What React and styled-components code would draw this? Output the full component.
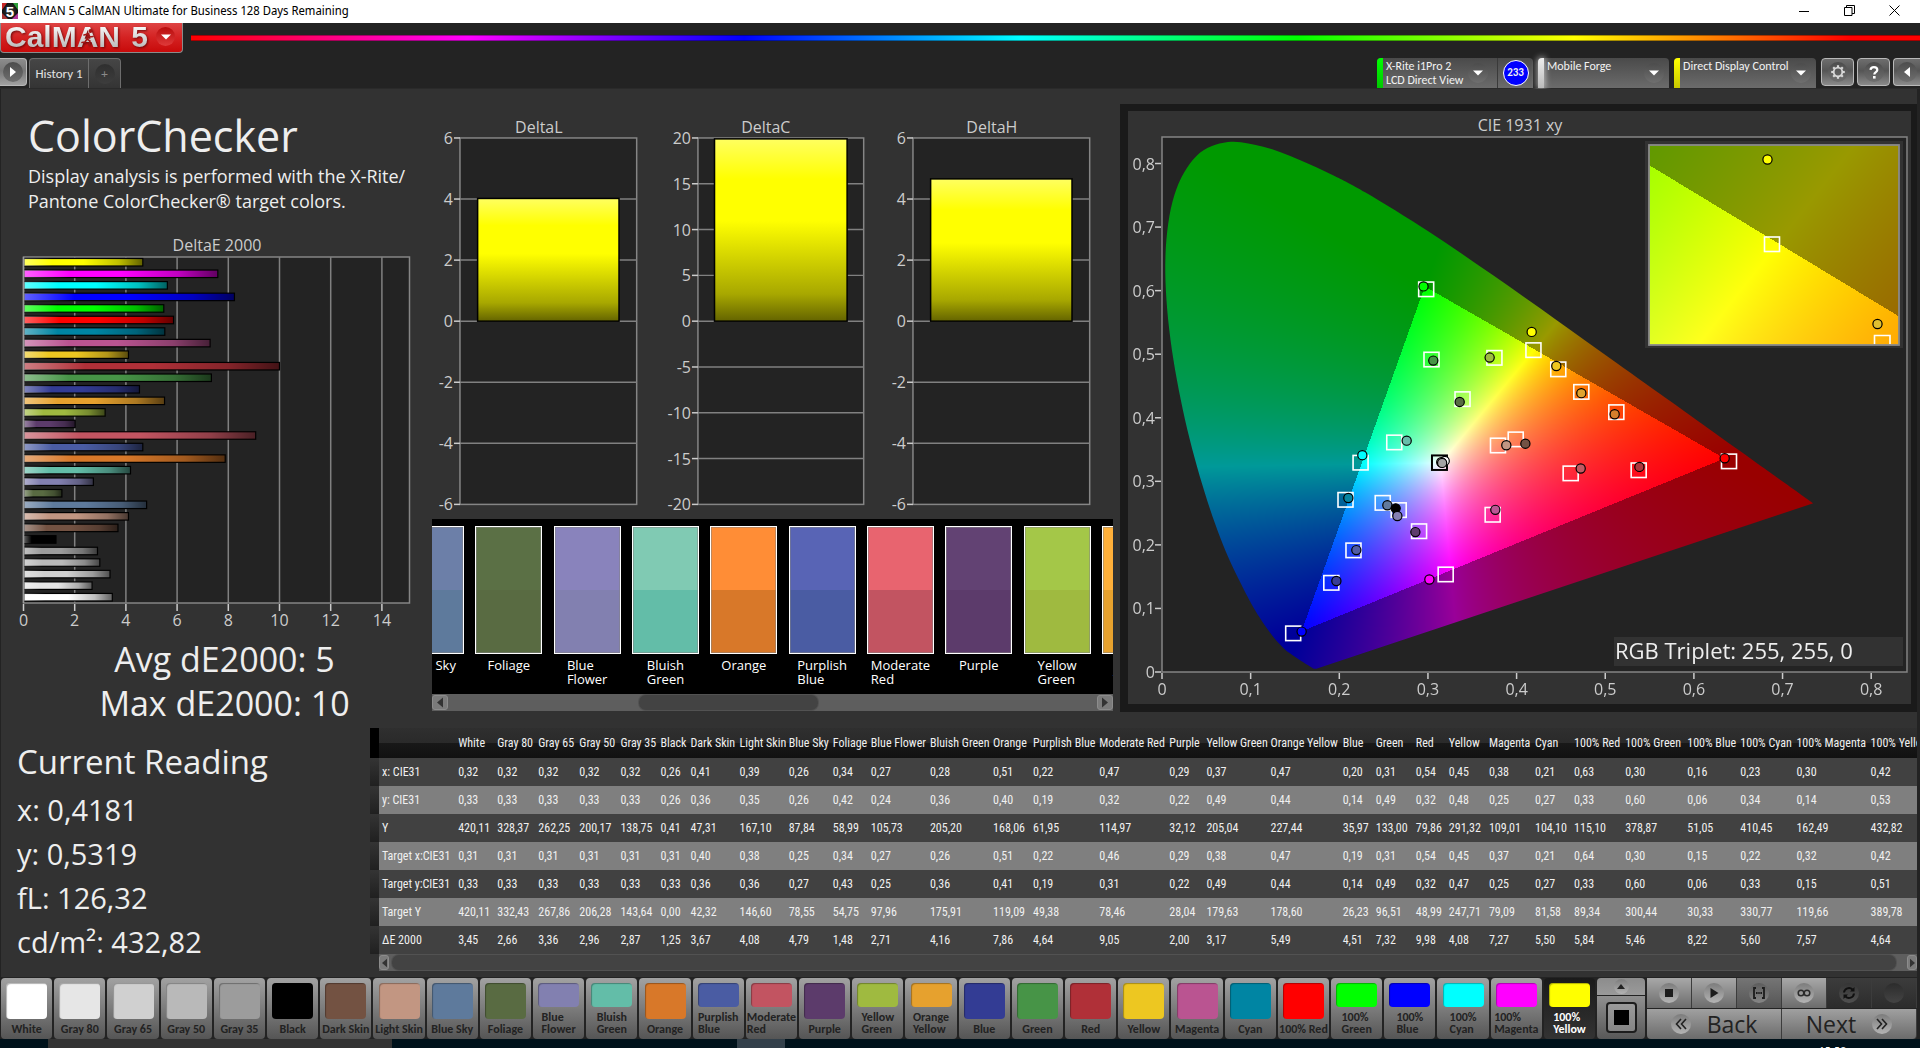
import React, { useEffect, useRef } from "react";
import styled, { createGlobalStyle, css } from "styled-components";

const WIDE = '"Open Sans", "Noto Sans", sans-serif';
const SMALL = 'Carlito, Lato, "Open Sans", sans-serif';
const NARROW = '"Roboto Condensed", Roboto, "Open Sans", sans-serif';

const Global = createGlobalStyle`
  *, *::before, *::after { box-sizing: border-box; }
  body { margin: 0; background: #232323; font-family: ${WIDE}; color: #eee; overflow: hidden; }
  button { font: inherit; color: inherit; margin: 0; padding: 0; border: 0; background: none; }
  h1, h2, p, ul { margin: 0; padding: 0; list-style: none; font-weight: 400; }
`;

/* ---------- data ---------- */

const PATCHES = [
  { name: "White", w: 39, c: "#ffffff", v: ["0,32", "0,33", "420,11", "0,31", "0,33", "420,11", "3,45"] },
  { name: "Gray 80", w: 41, c: "#e6e6e6", v: ["0,32", "0,33", "328,37", "0,31", "0,33", "332,43", "2,66"] },
  { name: "Gray 65", w: 41, c: "#d0d0d0", v: ["0,32", "0,33", "262,25", "0,31", "0,33", "267,86", "3,36"] },
  { name: "Gray 50", w: 41, c: "#b9b9b9", v: ["0,32", "0,33", "200,17", "0,31", "0,33", "206,28", "2,96"] },
  { name: "Gray 35", w: 40, c: "#9c9c9c", v: ["0,32", "0,33", "138,75", "0,31", "0,33", "143,64", "2,87"] },
  { name: "Black", w: 30, c: "#000000", v: ["0,26", "0,26", "0,41", "0,31", "0,33", "0,00", "1,25"] },
  { name: "Dark Skin", w: 49, c: "#735242", v: ["0,41", "0,36", "47,31", "0,40", "0,36", "42,32", "3,67"] },
  { name: "Light Skin", w: 49, c: "#c29682", v: ["0,39", "0,35", "167,10", "0,38", "0,36", "146,60", "4,08"] },
  { name: "Blue Sky", w: 44, c: "#5e7a9c", top: "#6c7fa8", v: ["0,26", "0,26", "87,84", "0,25", "0,27", "78,55", "4,79"] },
  { name: "Foliage", w: 38, c: "#596b42", top: "#5b7045", v: ["0,34", "0,42", "58,99", "0,34", "0,43", "54,75", "1,48"] },
  { name: "Blue\nFlower", w: 59, c: "#8280b0", top: "#8983bc", v: ["0,27", "0,24", "105,73", "0,27", "0,25", "97,96", "2,71"] },
  { name: "Bluish\nGreen", w: 63, c: "#63bda8", top: "#80cab3", v: ["0,28", "0,36", "205,20", "0,26", "0,36", "175,91", "4,16"] },
  { name: "Orange", w: 40, c: "#d87829", top: "#ff8d36", v: ["0,51", "0,40", "168,06", "0,51", "0,41", "119,09", "7,86"] },
  { name: "Purplish\nBlue", w: 66, c: "#4a5ca3", top: "#5864b5", v: ["0,22", "0,19", "61,95", "0,22", "0,19", "49,38", "4,64"] },
  { name: "Moderate\nRed", w: 70, c: "#c25461", top: "#e8646f", v: ["0,47", "0,32", "114,97", "0,46", "0,31", "78,46", "9,05"] },
  { name: "Purple", w: 37, c: "#5c3b6b", top: "#624273", v: ["0,29", "0,22", "32,12", "0,29", "0,22", "28,04", "2,00"] },
  { name: "Yellow\nGreen", w: 64, c: "#9fba40", top: "#a4c748", v: ["0,37", "0,49", "205,04", "0,38", "0,49", "179,63", "3,17"] },
  { name: "Orange\nYellow", w: 72, c: "#e6a12e", top: "#ffb03a", v: ["0,47", "0,44", "227,44", "0,47", "0,44", "178,60", "5,49"] },
  { name: "Blue", w: 33, c: "#333c94", v: ["0,20", "0,14", "35,97", "0,19", "0,14", "26,23", "4,51"] },
  { name: "Green", w: 40, c: "#479447", v: ["0,31", "0,49", "133,00", "0,31", "0,49", "96,51", "7,32"] },
  { name: "Red", w: 33, c: "#b03038", v: ["0,54", "0,32", "79,86", "0,54", "0,32", "48,99", "9,98"] },
  { name: "Yellow", w: 40, c: "#edc721", v: ["0,45", "0,48", "291,32", "0,45", "0,47", "247,71", "4,08"] },
  { name: "Magenta", w: 46, c: "#ba5491", v: ["0,38", "0,25", "109,01", "0,37", "0,25", "79,09", "7,27"] },
  { name: "Cyan", w: 39, c: "#0085a3", v: ["0,21", "0,27", "104,10", "0,21", "0,27", "81,58", "5,50"] },
  { name: "100% Red", w: 51, c: "#ff0000", v: ["0,63", "0,33", "115,10", "0,64", "0,33", "89,34", "5,84"] },
  { name: "100%\nGreen", w: 62, c: "#00ff00", v: ["0,30", "0,60", "378,87", "0,30", "0,60", "300,44", "5,46"] },
  { name: "100%\nBlue", w: 53, c: "#0000ff", v: ["0,16", "0,06", "51,05", "0,15", "0,06", "30,33", "8,22"] },
  { name: "100%\nCyan", w: 56, c: "#00ffff", v: ["0,23", "0,34", "410,45", "0,22", "0,33", "330,77", "5,60"] },
  { name: "100%\nMagenta", w: 74, c: "#ff00ff", v: ["0,30", "0,14", "162,49", "0,32", "0,15", "119,66", "7,57"] },
  { name: "100%\nYellow", w: 80, c: "#ffff00", v: ["0,42", "0,53", "432,82", "0,42", "0,51", "389,78", "4,64"] },
];

const ROWS = ["x: CIE31", "y: CIE31", "Y", "Target x:CIE31", "Target y:CIE31", "Target Y", "ΔE 2000"];

const LOCUS = [
  [0.1741, 0.005], [0.1714, 0.0051], [0.1689, 0.0069], [0.1644, 0.0109], [0.1566, 0.0177], [0.144, 0.0297],
  [0.1355, 0.0399], [0.1241, 0.0578], [0.1096, 0.0868], [0.0913, 0.1327], [0.0687, 0.2007], [0.0454, 0.295],
  [0.0235, 0.4127], [0.0082, 0.5384], [0.0039, 0.6548], [0.0139, 0.7502], [0.0389, 0.812], [0.0743, 0.8338],
  [0.1142, 0.8262], [0.1547, 0.8059], [0.1929, 0.7816], [0.2296, 0.7543], [0.3016, 0.6923], [0.3731, 0.6245],
  [0.4441, 0.5547], [0.5125, 0.4866], [0.5752, 0.4242], [0.627, 0.3725], [0.6658, 0.334], [0.6915, 0.3083],
  [0.719, 0.2809], [0.7347, 0.2653],
];

const TARGETS = [
  [0.298, 0.6025], [0.304, 0.492], [0.375, 0.4947], [0.339, 0.4297], [0.262, 0.3616], [0.224, 0.3297],
  [0.207, 0.2713], [0.249, 0.2665], [0.267, 0.2551], [0.29, 0.2219], [0.216, 0.1918], [0.191, 0.1407],
  [0.148, 0.0612], [0.32, 0.1539], [0.373, 0.2478], [0.379, 0.3568], [0.399, 0.3664], [0.461, 0.3129],
  [0.419, 0.5068], [0.447, 0.4766], [0.473, 0.4411], [0.5125, 0.4092], [0.5377, 0.3178], [0.6396, 0.3318],
];

const MEASURED = [
  [0.295, 0.6067, "#00ff00"], [0.306, 0.4899, "#469446"], [0.3696, 0.4947, "#9dbc40"], [0.3358, 0.4249, "#576c43"],
  [0.276, 0.364, "#67bdaa"], [0.226, 0.3412, "#00ffff"], [0.2102, 0.2737, "#0885a1"], [0.2542, 0.2623, "#627a9d"],
  [0.2636, 0.2575, "#000000"], [0.2655, 0.2454, "#8580b1"], [0.2858, 0.2201, "#5e3c6c"], [0.2192, 0.1918, "#505ba6"],
  [0.1967, 0.1431, "#383d96"], [0.1575, 0.0636, "#0000ff"], [0.3016, 0.1455, "#ff00ff"], [0.376, 0.2551, "#bb5695"],
  [0.3884, 0.3568, "#c29682"], [0.4099, 0.3592, "#735244"], [0.4723, 0.3201, "#c15a63"], [0.417, 0.5351, "#ffff00"],
  [0.4448, 0.4815, "#eec71f"], [0.473, 0.4387, "#e0a32e"], [0.5106, 0.4056, "#d67e2c"], [0.5385, 0.3227, "#af363c"],
  [0.6347, 0.3362, "#ff0000"], [0.3189, 0.3321, "#ffffff"], [0.315, 0.33, "#cccccc"], [0.316, 0.329, "#a4a4a4"],
];

/* ---------- chromaticity painting ---------- */

const RED = [0.6345, 0.336];
const GREEN = [0.2965, 0.6065];
const BLUE = [0.1575, 0.064];
const WHITE = [0.3145, 0.329];

const toXYZ = ([x, y]) => [x / y, 1, (1 - x - y) / y];

function invert(m) {
  const [[a, b, c], [d, e, f], [g, h, i]] = m;
  const A = e * i - f * h;
  const B = f * g - d * i;
  const C = d * h - e * g;
  const det = a * A + b * B + c * C;
  return [
    [A / det, (c * h - b * i) / det, (b * f - c * e) / det],
    [B / det, (a * i - c * g) / det, (c * d - a * f) / det],
    [C / det, (b * g - a * h) / det, (a * e - b * d) / det],
  ];
}
const apply = (m, v) => m.map((r) => r[0] * v[0] + r[1] * v[1] + r[2] * v[2]);

const TO_RGB = (() => {
  const p = [RED, GREEN, BLUE].map(toXYZ);
  const cols = [0, 1, 2].map((r) => p.map((q) => q[r]));
  const s = apply(invert(cols), toXYZ(WHITE));
  return invert(cols.map((row) => row.map((v, k) => v * s[k])));
})();

function paintGamut(canvas, range, clipLocus) {
  const { width: W, height: H } = canvas;
  const [x0, x1, y0, y1] = range;
  const layer = document.createElement("canvas");
  layer.width = W;
  layer.height = H;
  const lctx = layer.getContext("2d");
  const img = lctx.createImageData(W, H);
  for (let j = 0; j < H; j++) {
    const y = Math.max(0.001, y1 - ((j + 0.5) / H) * (y1 - y0));
    for (let i = 0; i < W; i++) {
      const x = x0 + ((i + 0.5) / W) * (x1 - x0);
      const rgb = apply(TO_RGB, [x / y, 1, (1 - x - y) / y]);
      const inside = rgb[0] >= 0 && rgb[1] >= 0 && rgb[2] >= 0;
      const k = (inside ? 255 : 153) / Math.max(rgb[0], rgb[1], rgb[2]);
      const o = (j * W + i) * 4;
      img.data[o] = Math.max(0, rgb[0]) * k;
      img.data[o + 1] = Math.max(0, rgb[1]) * k;
      img.data[o + 2] = Math.max(0, rgb[2]) * k;
      img.data[o + 3] = 255;
    }
  }
  lctx.putImageData(img, 0, 0);
  const ctx = canvas.getContext("2d");
  ctx.clearRect(0, 0, W, H);
  ctx.save();
  if (clipLocus) {
    const pts = LOCUS.map(([x, y]) => [((x - x0) / (x1 - x0)) * W, ((y1 - y) / (y1 - y0)) * H]);
    ctx.beginPath();
    ctx.moveTo(pts[0][0], pts[0][1]);
    for (let n = 0; n < pts.length - 1; n++) {
      const a = pts[Math.max(0, n - 1)];
      const b = pts[n];
      const c = pts[n + 1];
      const d = pts[Math.min(pts.length - 1, n + 2)];
      ctx.bezierCurveTo(
        b[0] + (c[0] - a[0]) / 6, b[1] + (c[1] - a[1]) / 6,
        c[0] - (d[0] - b[0]) / 6, c[1] - (d[1] - b[1]) / 6,
        c[0], c[1]
      );
    }
    ctx.closePath();
    ctx.clip();
  }
  ctx.drawImage(layer, 0, 0);
  ctx.restore();
}

const GamutCanvas = styled.canvas`
  display: block;
  width: 100%;
  height: 100%;
`;

function Gamut({ width, height, range, clipLocus }) {
  const ref = useRef(null);
  useEffect(() => {
    paintGamut(ref.current, range, clipLocus);
  }, [range, clipLocus]);
  return <GamutCanvas ref={ref} width={width} height={height} />;
}

/* ---------- window frame ---------- */

const Window = styled.div`
  display: flex;
  flex-direction: column;
  min-height: 100vh;
  background: #232323;
`;

const TitleBar = styled.header`
  display: flex;
  align-items: center;
  height: 23px;
  padding: 0 20px 2px 2px;
  gap: 5px;
  background: #fff;
  color: #000;
  font: 12px/20px "Noto Sans Display", "Noto Sans", sans-serif;
`;
const TitleText = styled.span`
  flex: 1;
  white-space: nowrap;
`;
const WindowButton = styled.button`
  display: flex;
  width: 12px;
  height: 20px;
  margin-left: 28px;
  align-items: center;
  justify-content: center;
`;

const BrandRow = styled.div`
  display: flex;
  height: 35px;
  gap: 8px;
`;
const Brand = styled.button`
  display: flex;
  align-items: center;
  gap: 8px;
  width: 183px;
  height: 30px;
  padding: 0 7px 2px 4px;
  border: solid #8b8b8b;
  border-width: 0 1px 1px 1px;
  border-radius: 0 0 4px 4px;
  background: linear-gradient(#de4444, #d42222 50%, #c80a0a);
`;
const BrandName = styled.span`
  position: relative;
  flex: 1;
  display: flex;
  justify-content: space-between;
  font: 700 30px/26px "Liberation Sans", Arial, sans-serif;
  white-space: nowrap;
  color: #dcdcdc;
  background: linear-gradient(#fff, #b4b4b4);
  background-clip: text;
  -webkit-text-fill-color: transparent;
  filter: drop-shadow(1px 1px 1px rgba(70, 0, 0, 0.7));
`;
const Runner = styled.svg`
  position: absolute;
  left: 76px;
  top: 3px;
`;
const Rainbow = styled.div`
  flex: 1;
  height: 6px;
  margin-top: 12px;
  border: solid rgba(0, 0, 0, 0.35);
  border-width: 1px 0;
  background: linear-gradient(90deg, #f00, #f0f 16%, #00f 32%, #0ff 48%, #0f0 64%, #ff0 80%, #f00 96%);
`;

const Knob = styled.span`
  display: flex;
  flex: none;
  align-items: center;
  justify-content: center;
  width: ${(p) => p.$size || 20}px;
  height: ${(p) => p.$size || 20}px;
  border-radius: 50%;
  background: ${(p) => p.$fill || "linear-gradient(#4c4c4c, #6f6f6f)"};
`;

const ToolRow = styled.div`
  display: flex;
  height: 31px;
  font: 12px/14px ${SMALL};
  border-bottom: 1px solid #2a2a2a;
`;
const metal = css`
  border: 1px solid #b9b9b9;
  border-radius: 4px;
  background: linear-gradient(#6e6e6e, #555 45%, #8b8b8b);
`;
const MetalButton = styled.button`
  ${metal}
  display: flex;
  align-items: center;
  justify-content: center;
  width: ${(p) => p.$w || 33}px;
  height: 28px;
  ${(p) => p.$edge === "left" && "border-left: 0; border-radius: 0 4px 4px 0; background: linear-gradient(#8c8c8c, #777 45%, #a2a2a2);"}
  ${(p) => p.$edge === "right" && "border-right: 0; border-radius: 4px 0 0 4px;"}
`;
const Tabs = styled.nav`
  display: flex;
  margin: 0 auto 0 2px;
  border: solid #6d6d6d;
  border-width: 1px 1px 0;
  border-radius: 4px 4px 0 0;
  background: linear-gradient(#464646, #343434);
`;
const Tab = styled.button`
  display: flex;
  align-items: center;
  justify-content: center;
  width: ${(p) => p.$w}px;
  font: 13px/20px ${SMALL};
  color: #e2e2e2;
  & + & {
    border-left: 1px solid #6d6d6d;
    color: #8a8a8a;
  }
`;
const DeviceGroup = styled.div`
  display: flex;
  gap: 3px;
`;
const Device = styled.button`
  display: flex;
  align-items: flex-start;
  width: ${(p) => p.$w}px;
  height: 30px;
  margin-right: 2px;
  border-radius: 4px 4px 0 0;
  background: linear-gradient(#4a4a4a, #6b6b6b);
  text-align: left;
  color: #f2f2f2;
`;
const DeviceMark = styled.span`
  align-self: stretch;
  width: 6px;
  margin-right: 3px;
  border-radius: 4px 0 0 0;
  background: ${(p) => p.$c};
  box-shadow: ${(p) => (p.$glow ? "0 0 6px 1px rgba(255,255,255,.6)" : "none")};
`;
const DeviceName = styled.span`
  flex: 1;
  padding-top: 1px;
  white-space: pre-line;
`;
const DeviceArrow = styled(Knob)`
  margin: 5px 5px 0 0;
`;
const ReadCount = styled.span`
  display: flex;
  align-items: center;
  justify-content: center;
  align-self: stretch;
  width: 36px;
  margin-left: 4px;
  border-left: 1px solid #3a3a3a;
`;
const CountBadge = styled.span`
  width: 26px;
  height: 26px;
  border: 1px solid #fff;
  border-radius: 50%;
  background: #00f;
  font: 700 11px/24px ${SMALL};
  text-align: center;
`;

/* ---------- main panel ---------- */

const Panel = styled.main`
  flex: 1;
  display: flex;
  flex-direction: column;
  margin: 0 3px 0 1px;
  background: #323232;
`;
const TopRow = styled.div`
  display: flex;
`;
const Summary = styled.section`
  flex: 0 0 431px;
  padding-top: 19px;
`;
const Heading = styled.h1`
  padding-left: 27px;
  font-size: 43px;
  line-height: 56px;
`;
const Intro = styled.p`
  padding-left: 27px;
  font-size: 18px;
  line-height: 25px;
  white-space: pre-line;
`;
const Chart = styled.svg`
  display: block;
  width: 100%;
  height: auto;
  font-family: ${WIDE};
  font-size: 16px;
`;
const SummaryChart = styled(Chart)`
  margin-top: 18px;
`;
const Scores = styled.div`
  padding: 5px 0 0 16px;
`;
const Score = styled.p`
  text-align: center;
  font-size: 34px;
  line-height: 44px;
`;

const Middle = styled.section`
  flex: 681 1 0;
  min-width: 0;
  padding-top: 29px;
`;
const DeltaRow = styled.div`
  display: flex;
  gap: 17px;
  padding: 0 16px 8px 2px;
`;
const DeltaCell = styled.div`
  flex: 1;
  min-width: 0;
`;
const Strip = styled.div`
  overflow: hidden;
  background: #000;
`;
const StripList = styled.ul`
  display: flex;
  justify-content: space-between;
  margin: 0 -56px 0 -35px;
  padding: 7px 0 8px;
`;
const StripItem = styled.li`
  display: flex;
  flex-direction: column;
  align-items: center;
  width: 67px;
  gap: 4px;
`;
const StripColor = styled.div`
  width: 67px;
  height: 128px;
  border: 1px solid #fff;
  box-shadow: inset 0 0 0 1px rgba(130, 130, 130, 0.5);
  background: linear-gradient(${(p) => p.$top} 50%, ${(p) => p.$c} 50%);
`;
const StripLabel = styled.span`
  min-height: 28px;
  font-size: 13px;
  line-height: 14px;
  color: #fff;
  white-space: pre;
`;

const ScrollTrack = styled.div`
  display: flex;
  align-items: center;
  height: 17px;
  background: #5e5e5e;
`;
const ScrollArrow = styled.button`
  display: flex;
  flex: none;
  align-items: center;
  justify-content: center;
  width: ${(p) => p.$w}px;
  height: 15px;
  border: 1px solid #8c8c8c;
  border-radius: 3px;
  background: #7b7b7b;
`;
const ScrollLane = styled.div`
  flex: 1;
  display: flex;
  padding: ${(p) => p.$pad};
`;
const ScrollThumb = styled.div`
  flex: 1;
  height: 15px;
  border-radius: 7px;
  background: #434343;
  box-shadow: 0 0 0 1px #525252;
`;

const CiePanel = styled.section`
  flex: 783 1 0;
  min-width: 0;
  align-self: flex-start;
  margin: 15px 0 0 7px;
  border: solid #1a1a1a;
  border-width: 7px 6px 8px 8px;
  background: #323232;
`;

const BottomRow = styled.div`
  display: flex;
  padding: 3px 0 4px;
`;
const Reading = styled.section`
  flex: 0 0 369px;
  padding: 12px 0 0 16px;
`;
const ReadingTitle = styled.h2`
  margin-bottom: 4px;
  font-size: 33px;
  line-height: 44px;
`;
const ReadingLine = styled.p`
  font-size: 29px;
  line-height: 44px;
`;

const DataPane = styled.section`
  flex: 1;
  min-width: 0;
`;
const DataClip = styled.div`
  overflow: hidden;
`;
const DataTable = styled.table`
  table-layout: fixed;
  width: 1578px;
  border-collapse: collapse;
  font: 12px/16px ${NARROW};
  color: #f0f0f0;
  text-align: left;
  th, td {
    padding: 0 0 0 3px;
    font-weight: 400;
    white-space: nowrap;
  }
`;
const HeadRow = styled.tr`
  height: 30px;
  background: linear-gradient(#2f2f2f, #2a2a2a 50%, #181818 50%, #111);
`;
const BodyRow = styled.tr`
  height: 28px;
  background: ${(p) => (p.$light ? "#7f7f7f" : "#414141")};
`;
const Gutter = styled.td`
  background: ${(p) => (p.$head ? "#000" : "linear-gradient(#343434, #202020)")};
`;
const DataScroll = styled.div`
  padding-left: 9px;
`;

/* ---------- bottom bar ---------- */

const PatchBar = styled.footer`
  display: flex;
  gap: 2px;
  height: 62px;
  padding: 1px 1px 0 1px;
  background: #232323;
`;
const PatchList = styled.div`
  flex: 1;
  display: flex;
  gap: 2px;
  min-width: 0;
`;
const Patch = styled.button`
  flex: 1 1 0;
  min-width: 0;
  display: flex;
  flex-direction: column;
  align-items: center;
  gap: 4px;
  padding-top: 5px;
  border-radius: 4px;
  background: ${(p) => (p.$on ? "linear-gradient(#1a1a1a, #333)" : "linear-gradient(#a2a2a2, #555)")};
  color: ${(p) => (p.$on ? "#fff" : "#222")};
  font: 700 12px/12px ${SMALL};
  text-align: left;
  white-space: pre;
`;
const PatchColor = styled.span`
  width: 41px;
  height: ${(p) => (p.$short ? 24 : 36)}px;
  border-radius: 4px;
  background: ${(p) => p.$c};
  box-shadow: inset 1px 1px 1px rgba(0, 0, 0, 0.3);
`;
const PatternColumn = styled.div`
  display: flex;
  flex-direction: column;
  gap: 1px;
  width: 48px;
`;
const PatternUp = styled.button`
  display: flex;
  align-items: center;
  justify-content: center;
  height: 17px;
  border-radius: 4px 4px 0 0;
  background: linear-gradient(#8c8c8c, #9a9a9a);
`;
const PatternButton = styled.button`
  flex: 1;
  display: flex;
  align-items: center;
  justify-content: center;
  border-radius: 0 0 4px 4px;
  background: linear-gradient(#909090, #585858);
`;
const PatternIcon = styled.span`
  display: flex;
  align-items: center;
  justify-content: center;
  width: 31px;
  height: 31px;
  border: 2px solid #1d1d1d;
  border-radius: 4px;
  background: linear-gradient(#9b9b9b, #858585);
  &::after {
    content: "";
    width: 15px;
    height: 15px;
    background: #000;
  }
`;
const Transport = styled.div`
  display: grid;
  grid-template-columns: repeat(6, 45px);
  grid-template-rows: 30px 30px;
  gap: 1px 0;
  margin-right: 2px;
`;
const TransportButton = styled.button`
  display: flex;
  align-items: center;
  justify-content: center;
  border-right: 1px solid #3c3c3c;
  background: ${(p) =>
    ({ light: "linear-gradient(#a8a8a8, #6c6c6c)", mid: "linear-gradient(#757575, #555)", dark: "linear-gradient(#3c3c3c, #2c2c2c)" }[p.$tone])};
`;
const StepButton = styled.button`
  grid-column: span 3;
  display: flex;
  align-items: center;
  justify-content: center;
  gap: 16px;
  border-right: 1px solid #3c3c3c;
  border-radius: ${(p) => (p.$next ? "0 0 4px 0" : "0 0 0 4px")};
  background: linear-gradient(#a0a0a0, #6b6b6b);
  font-size: 23px;
  line-height: 28px;
  color: #222;
`;

const Taskbar = styled.div`
  display: flex;
  height: 9px;
  overflow: hidden;
  background: #00121b;
  font: 12px/18px ${SMALL};
  color: #fff;
`;
const TaskItem = styled.span`
  width: ${(p) => p.$w}px;
  margin-left: ${(p) => p.$gap}px;
  background: ${(p) => p.$c};
`;
const Clock = styled.time`
  margin: 3px 74px 0 auto;
`;

/* ---------- drawings ---------- */

const Down = ({ c = "#fff" }) => (
  <svg width="10" height="6" viewBox="0 0 10 6"><path d="M0 0.5h10L5 5.5z" fill={c} /></svg>
);
const Side = ({ left, c = "#fff", w = 6, h = 10 }) => (
  <svg width={w} height={h} viewBox="0 0 6 10"><path d={left ? "M6 0v10L0 5z" : "M0 0v10L6 5z"} fill={c} /></svg>
);

const AppIcon = () => (
  <svg width="16" height="16" viewBox="0 0 16 16">
    <defs>
      <radialGradient id="appIcon">
        <stop offset="0" stopColor="#3c3c3c" />
        <stop offset="1" stopColor="#101010" />
      </radialGradient>
    </defs>
    <rect width="16" height="16" fill="url(#appIcon)" />
    <path d="M0 0h5L0 7z" fill="#c62828" />
    <path d="M11 0h5v7z" fill="#2e9e3a" />
    <path d="M0 10v6h6z" fill="#a33" />
    <path d="M16 10v6h-6z" fill="#b3369b" />
    <text x="8" y="14" fontSize="15" fontWeight="700" fontFamily="Liberation Sans, sans-serif" textAnchor="middle" fill="#fff">5</text>
  </svg>
);

const Gear = () => (
  <svg width="16" height="16" viewBox="0 0 16 16" fill="none" stroke="#d8d8d8">
    <circle cx="8" cy="8" r="4.3" strokeWidth="1.8" />
    {[0, 45, 90, 135, 180, 225, 270, 315].map((a) => (
      <path key={a} d="M8 3.4V1.2" strokeWidth="2.2" transform={`rotate(${a} 8 8)`} />
    ))}
  </svg>
);

const LIGHT_KNOB = "linear-gradient(#7c7c7c, #b4b4b4)";
const TRANSPORT = [
  { label: "Stop", tone: "light", knob: LIGHT_KNOB, icon: <rect x="4" y="4" width="8" height="8" fill="#1c1c1c" /> },
  { label: "Play", tone: "light", knob: LIGHT_KNOB, icon: <path d="M4.5 3v10l8-5z" fill="#1c1c1c" /> },
  {
    label: "Range", tone: "mid", knob: "linear-gradient(#5c5c5c, #868686)",
    icon: <path d="M5 3H3v10h2M11 3h2v10h-2M5 8h1.6M7.3 8h1.4M9.4 8H11" fill="none" stroke="#1c1c1c" strokeWidth="1.8" />,
  },
  {
    label: "Loop", tone: "light", knob: LIGHT_KNOB,
    icon: (
      <g fill="none" stroke="#2a2a2a" strokeWidth="1.5">
        <circle cx="5" cy="8" r="2.8" />
        <circle cx="11" cy="8" r="2.8" />
      </g>
    ),
  },
  {
    label: "Repeat", tone: "dark", knob: "linear-gradient(#353535, #505050)",
    icon: (
      <g fill="none" stroke="#101010" strokeWidth="2">
        <path d="M3 7.500a5 5 0 0 1 8.500-3" />
        <path d="M13 8.500a5 5 0 0 1-8.500 3" />
        <path d="M13.500 2v4.500H9zM2.500 14V9.500H7z" fill="#101010" stroke="none" />
      </g>
    ),
  },
  { label: "Record", tone: "dark", knob: "linear-gradient(#2c2c2c, #444)", icon: null },
];

/* ---------- charts ---------- */

function DeltaEChart() {
  const left = 22.5;
  const unit = 25.6;
  const bars = [...PATCHES].reverse();
  return (
    <SummaryChart viewBox="0 0 431 400" role="img" aria-label="DeltaE 2000">
      <defs>
        <linearGradient id="barShade">
          <stop offset="0" stopColor="#fff" stopOpacity="0.38" />
          <stop offset="0.24" stopColor="#fff" stopOpacity="0" />
          <stop offset="0.5" stopColor="#000" stopOpacity="0" />
          <stop offset="0.8" stopColor="#000" stopOpacity="0.25" />
          <stop offset="1" stopColor="#000" stopOpacity="0.62" />
        </linearGradient>
      </defs>
      <text x="216" y="19" textAnchor="middle" fill="#ccc">DeltaE 2000</text>
      <rect x={left} y="25" width="386" height="346" fill="#232323" stroke="#858585" strokeWidth="1.5" />
      {[0, 2, 4, 6, 8, 10, 12, 14].map((t) => (
        <g key={t}>
          {t > 0 && <path d={`M${left + t * unit} 25V371`} stroke="#808080" strokeWidth="1.5" />}
          <path d={`M${left + t * unit} 372v7`} stroke="#ccc" strokeWidth="1.5" />
          <text x={left + t * unit} y="394" textAnchor="middle" fill="#ccc">{t}</text>
        </g>
      ))}
      {bars.map((p, i) => {
        const box = {
          x: left + 0.5,
          y: 26.5 + i * 11.55,
          width: parseFloat(p.v[6].replace(",", ".")) * unit,
          height: 7.5,
        };
        return (
          <g key={p.name}>
            <rect {...box} fill={p.c} stroke="#000" strokeWidth="1.2" />
            <rect {...box} fill="url(#barShade)" />
          </g>
        );
      })}
      <path d={`M${left} 25V371`} stroke="#999" strokeWidth="1.5" />
    </SummaryChart>
  );
}

function DeltaChart({ title, left, max, step, value }) {
  const right = 203;
  const y = (v) => 203.5 - (v / max) * 183.5;
  const ticks = [];
  for (let t = max; t >= -max; t -= step) ticks.push(t);
  const inset = (right - left) / 10;
  return (
    <Chart viewBox="0 0 210 394" role="img" aria-label={title}>
      <defs>
        <linearGradient id="columnShade" x2="0" y2="1">
          <stop offset="0" stopColor="#ffff60" />
          <stop offset="0.22" stopColor="#ffff00" />
          <stop offset="0.45" stopColor="#ffff00" />
          <stop offset="0.85" stopColor="#a8a800" />
          <stop offset="1" stopColor="#646400" />
        </linearGradient>
      </defs>
      <text x="105" y="15" textAnchor="middle" fill="#ccc">{title}</text>
      <rect x={left} y={y(max)} width={right - left} height={y(-max) - y(max)} fill="#232323" stroke="#858585" strokeWidth="1.5" />
      {ticks.map((t) => (
        <g key={t}>
          {Math.abs(t) !== max && <path d={`M${left} ${y(t)}H${right}`} stroke="#808080" strokeWidth="1.5" />}
          <path d={`M${left - 6} ${y(t)}h6`} stroke="#ccc" strokeWidth="1.5" />
          <text x={left - 7} y={y(t) + 6} textAnchor="end" fill="#ccc">{t}</text>
        </g>
      ))}
      <rect x={left + inset} y={y(value)} width={right - left - 2 * inset} height={y(0) - y(value)} fill="url(#columnShade)" stroke="#000" strokeWidth="1.5" />
    </Chart>
  );
}

const FULL_RANGE = [0, 0.8415, 0, 0.8417];
const INSET_RANGE = [0.3888, 0.4498, 0.4746, 0.5391];

const Target = ({ x, y, stroke = "#fff", strokeWidth = 1.6 }) => (
  <rect x={x - 7.5} y={y - 7} width="15" height="14.5" fill="none" stroke={stroke} strokeWidth={strokeWidth} />
);
const Dot = ({ x, y, fill }) => <circle cx={x} cy={y} r="4.6" fill={fill} stroke="#000" strokeWidth="1.2" />;

function CieChart() {
  const px = (x) => 34 + x * 886.5;
  const py = (y) => 561 - y * 635.6;
  const steps = [0, 1, 2, 3, 4, 5, 6, 7, 8];
  const label = (n) => (n === 0 ? "0" : `0,${n}`);
  return (
    <Chart viewBox="0 0 783 593" role="img" aria-label="CIE 1931 xy">
      <text x="392" y="20" textAnchor="middle" fill="#ccc">CIE 1931 xy</text>
      <rect x="34" y="26" width="746" height="535" fill="#232323" />
      <foreignObject x="34" y="26" width="746" height="535">
        <Gamut width={746} height={535} range={FULL_RANGE} clipLocus />
      </foreignObject>
      <rect x="34" y="26" width="745" height="535" fill="none" stroke="#858585" strokeWidth="1.5" />
      {steps.map((n) => (
        <g key={n} fill="#ccc">
          <path d={`M${px(n / 10)} 562v6`} stroke="#ccc" strokeWidth="1.5" />
          <text x={px(n / 10)} y="584" textAnchor="middle">{label(n)}</text>
          <path d={`M33 ${py(n / 10)}h-6`} stroke="#ccc" strokeWidth="1.5" />
          <text x="27" y={py(n / 10) + 6} textAnchor="end">{label(n)}</text>
        </g>
      ))}
      {TARGETS.map(([x, y]) => <Target key={`${x}-${y}`} x={px(x)} y={py(y)} />)}
      <Target x={px(0.313)} y={py(0.3297)} stroke="#000" strokeWidth={2} />
      {MEASURED.map(([x, y, c]) => <Dot key={`${x}-${y}`} x={px(x)} y={py(y)} fill={c} />)}
      <rect x="517" y="30" width="258" height="207" fill="#323232" />
      <foreignObject x="521" y="34" width="250" height="200">
        <Gamut width={250} height={200} range={INSET_RANGE} />
      </foreignObject>
      <Dot x={639.5} y={48.5} fill="#ffff00" />
      <Target x={644} y={133} />
      <Dot x={749.5} y={213} fill="#e0c030" />
      <path d="M746.5 233.5V224.5h15.5V233.5" fill="none" stroke="#fff" strokeWidth="1.6" />
      <rect x="521" y="34" width="250" height="200" fill="none" stroke="#8a8a8a" strokeWidth="1.8" />
      <rect x="486" y="526" width="289" height="29" fill="#323232" />
      <text x="487" y="548" fontSize="22" fill="#eee">RGB Triplet: 255, 255, 0</text>
    </Chart>
  );
}

/* ---------- page ---------- */

export default function App() {
  return (
    <Window>
      <Global />
      <TitleBar>
        <AppIcon />
        <TitleText>CalMAN 5 CalMAN Ultimate for Business 128 Days Remaining</TitleText>
        <WindowButton aria-label="Minimize">
          <svg width="10" height="10"><path d="M0 5.5h10" stroke="#000" /></svg>
        </WindowButton>
        <WindowButton aria-label="Restore">
          <svg width="11" height="11" fill="none" stroke="#000"><path d="M.5 2.5h7.5v8H.5zM2.500 2.500V.5h8v8H8" /></svg>
        </WindowButton>
        <WindowButton aria-label="Close">
          <svg width="11" height="11" stroke="#000"><path d="M.5.5l10 10M10.500.5l-10 10" /></svg>
        </WindowButton>
      </TitleBar>

      <BrandRow>
        <Brand aria-label="CalMAN 5 menu">
          <BrandName>
            <span>CalMAN</span>
            <span>5</span>
            <Runner width="14" height="20" viewBox="0 0 14 20" fill="none" stroke="#a31515" strokeWidth="1.6" strokeLinecap="round">
              <circle cx="9.5" cy="4" r="1.2" fill="#a31515" />
              <path d="M8 7l-2 5 3 2-1 4M6 12l-2 3-3 .5M3 8l4-1 2 3 3-.5" />
            </Runner>
          </BrandName>
          <Knob $size={19} $fill="linear-gradient(#b80c0c, #df3a3a)"><Down /></Knob>
        </Brand>
        <Rainbow />
      </BrandRow>

      <ToolRow>
        <MetalButton $w={27} $edge="left" aria-label="Expand"><Knob><Side /></Knob></MetalButton>
        <Tabs>
          <Tab $w={58}>History 1</Tab>
          <Tab $w={32} aria-label="Add tab"><Knob $fill="linear-gradient(#2f2f2f, #3d3d3d)">+</Knob></Tab>
        </Tabs>
        <DeviceGroup>
          <Device $w={156}>
            <DeviceMark $c="linear-gradient(#0f0, #00c800)" />
            <DeviceName>{"X-Rite i1Pro 2\nLCD Direct View"}</DeviceName>
            <DeviceArrow><Down /></DeviceArrow>
            <ReadCount><CountBadge>233</CountBadge></ReadCount>
          </Device>
          <Device $w={131}>
            <DeviceMark $c="linear-gradient(#eee, #bbb)" $glow />
            <DeviceName>Mobile Forge</DeviceName>
            <DeviceArrow><Down /></DeviceArrow>
          </Device>
          <Device $w={142}>
            <DeviceMark $c="linear-gradient(#ff0, #c8c800)" />
            <DeviceName>Direct Display Control</DeviceName>
            <DeviceArrow><Down /></DeviceArrow>
          </Device>
          <MetalButton aria-label="Settings"><Knob><Gear /></Knob></MetalButton>
          <MetalButton aria-label="Help">
            <Knob>
              <svg width="10" height="13" viewBox="0 0 10 13">
                <path d="M1.500 3.800C1.700 2 3 1.200 4.900 1.200c2 0 3.400 1 3.400 2.700 0 2-3 2.300-3 4.500" fill="none" stroke="#fff" strokeWidth="2.2" />
                <rect x="4" y="10" width="2.6" height="2.6" fill="#fff" />
              </svg>
            </Knob>
          </MetalButton>
          <MetalButton $w={27} $edge="right" aria-label="Collapse"><Knob><Side left /></Knob></MetalButton>
        </DeviceGroup>
      </ToolRow>

      <Panel>
        <TopRow>
          <Summary>
            <Heading>ColorChecker</Heading>
            <Intro>{"Display analysis is performed with the X-Rite/\nPantone ColorChecker® target colors."}</Intro>
            <DeltaEChart />
            <Scores>
              <Score>Avg dE2000: 5</Score>
              <Score>Max dE2000: 10</Score>
            </Scores>
          </Summary>

          <Middle>
            <DeltaRow>
              <DeltaCell><DeltaChart title="DeltaL" left={26} max={6} step={2} value={4.02} /></DeltaCell>
              <DeltaCell><DeltaChart title="DeltaC" left={37} max={20} step={5} value={19.9} /></DeltaCell>
              <DeltaCell><DeltaChart title="DeltaH" left={26} max={6} step={2} value={4.66} /></DeltaCell>
            </DeltaRow>
            <Strip>
              <StripList>
                {PATCHES.slice(8, 18).map((p) => (
                  <StripItem key={p.name}>
                    <StripColor $top={p.top} $c={p.c} />
                    <StripLabel>{p.name}</StripLabel>
                  </StripItem>
                ))}
              </StripList>
              <ScrollTrack>
                <ScrollArrow $w={16} aria-label="Scroll left"><Side left c="#333" w={6} h={11} /></ScrollArrow>
                <ScrollLane $pad="0 41% 0 28%"><ScrollThumb /></ScrollLane>
                <ScrollArrow $w={16} aria-label="Scroll right"><Side c="#333" w={6} h={11} /></ScrollArrow>
              </ScrollTrack>
            </Strip>
          </Middle>

          <CiePanel>
            <CieChart />
          </CiePanel>
        </TopRow>

        <BottomRow>
          <Reading>
            <ReadingTitle>Current Reading</ReadingTitle>
            <ReadingLine>x: 0,4181</ReadingLine>
            <ReadingLine>y: 0,5319</ReadingLine>
            <ReadingLine>fL: 126,32</ReadingLine>
            <ReadingLine>cd/m²: 432,82</ReadingLine>
          </Reading>
          <DataPane>
            <DataClip>
              <DataTable>
                <colgroup>
                  <col width="9" />
                  <col width="76" />
                  {PATCHES.map((p) => <col key={p.name} width={p.w} />)}
                </colgroup>
                <thead>
                  <HeadRow>
                    <Gutter $head />
                    <td />
                    {PATCHES.map((p) => <th key={p.name} scope="col">{p.name.replace("\n", " ")}</th>)}
                  </HeadRow>
                </thead>
                <tbody>
                  {ROWS.map((r, i) => (
                    <BodyRow key={r} $light={i % 2 === 1}>
                      <Gutter />
                      <th scope="row">{r}</th>
                      {PATCHES.map((p) => <td key={p.name}>{p.v[i]}</td>)}
                    </BodyRow>
                  ))}
                </tbody>
              </DataTable>
            </DataClip>
            <DataScroll>
              <ScrollTrack>
                <ScrollArrow $w={10} aria-label="Scroll left"><Side left c="#333" w={5} h={10} /></ScrollArrow>
                <ScrollLane $pad="0 11px 0 3px"><ScrollThumb /></ScrollLane>
                <ScrollArrow $w={10} aria-label="Scroll right"><Side c="#333" w={5} h={10} /></ScrollArrow>
              </ScrollTrack>
            </DataScroll>
          </DataPane>
        </BottomRow>
      </Panel>

      <PatchBar>
        <PatchList>
          {PATCHES.map((p, i) => (
            <Patch key={p.name} $on={i === PATCHES.length - 1}>
              <PatchColor $c={p.c} $short={p.name.includes("\n")} />
              <span>{p.name}</span>
            </Patch>
          ))}
        </PatchList>
        <PatternColumn>
          <PatternUp aria-label="Pattern options">
            <Knob $size={15} $fill={LIGHT_KNOB}>
              <svg width="8" height="5"><path d="M0 5h8L4 0z" fill="#222" /></svg>
            </Knob>
          </PatternUp>
          <PatternButton aria-label="Pattern"><PatternIcon /></PatternButton>
        </PatternColumn>
        <Transport>
          {TRANSPORT.map((t) => (
            <TransportButton key={t.label} $tone={t.tone} aria-label={t.label}>
              <Knob $fill={t.knob}><svg width="16" height="16" viewBox="0 0 16 16">{t.icon}</svg></Knob>
            </TransportButton>
          ))}
          <StepButton>
            <Knob $fill={LIGHT_KNOB}>
              <svg width="12" height="12" fill="none" stroke="#222" strokeWidth="1.6"><path d="M6 1L1.500 6 6 11M11 1L6.500 6 11 11" /></svg>
            </Knob>
            Back
          </StepButton>
          <StepButton $next>
            Next
            <Knob $fill={LIGHT_KNOB}>
              <svg width="12" height="12" fill="none" stroke="#222" strokeWidth="1.6"><path d="M1 1l4.500 5L1 11M6 1l4.500 5L6 11" /></svg>
            </Knob>
          </StepButton>
        </Transport>
      </PatchBar>

      <Taskbar>
        <TaskItem $gap={48} $w={344} $c="#333" />
        <TaskItem $gap={345} $w={48} $c="#33404a" />
        <Clock>15:53</Clock>
      </Taskbar>
    </Window>
  );
}
